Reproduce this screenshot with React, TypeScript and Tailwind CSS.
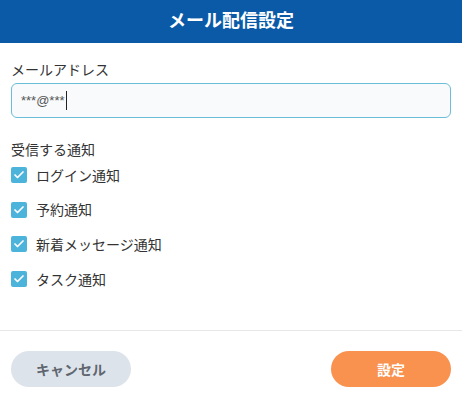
import { Check } from 'lucide-react'

const items = ['ログイン通知', '予約通知', '新着メッセージ通知', 'タスク通知']

export default function App() {
  return (
    <div
      className="w-[462px] h-[394px] bg-white flex flex-col text-[#333]"
      style={{ fontFamily: '"Noto Sans CJK JP", "Noto Sans", sans-serif' }}
    >
      <header className="h-[43px] shrink-0 bg-[#0b5aa8] flex items-center justify-center">
        <h1 className="text-white font-bold text-[18px] leading-none -mt-[6px]">メール配信設定</h1>
      </header>

      <div className="px-[11px] pt-[16px] flex-1">
        <label className="block text-[14px] leading-[20px] text-[#333]">メールアドレス</label>
        <div className="mt-[4px] h-[35px] rounded-[6px] border border-[#6bbdd9] bg-[#f8fafc] flex items-center px-[9px] text-[13px] text-[#555]">
          <span style={{ fontFamily: '"Liberation Sans", sans-serif' }}>***@***</span>
          <span className="ml-px w-px h-[19px] bg-[#222]" />
        </div>

        <p className="mt-[21px] text-[14px] leading-[20px]">受信する通知</p>
        <ul className="mt-[6px] flex flex-col gap-[14.7px]">
          {items.map(label => (
            <li key={label} className="flex items-center gap-[9px] h-[20px]">
              <span className="w-[16px] h-[16px] rounded-[2px] bg-[#4cb3da] flex items-center justify-center">
                <Check className="w-[12px] h-[12px] text-white" strokeWidth={3.5} />
              </span>
              <span className="text-[14px]">{label}</span>
            </li>
          ))}
        </ul>
      </div>

      <div className="border-t border-[#e5e7eb] h-[64px] shrink-0 flex items-start justify-between px-[11px] pt-[20px]">
        <button className="w-[120px] h-[36px] rounded-full bg-[#dde3ea] text-[#5f6670] font-bold text-[14px]">
          キャンセル
        </button>
        <button className="w-[120px] h-[36px] rounded-full bg-[#f9914f] text-white font-bold text-[14px]">
          設定
        </button>
      </div>
    </div>
  )
}
